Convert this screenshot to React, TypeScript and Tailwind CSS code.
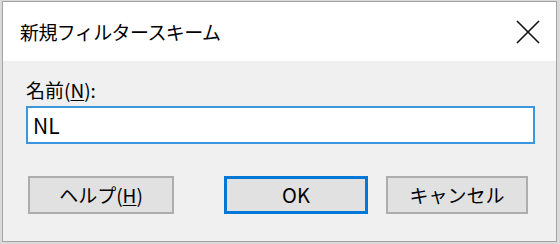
export default function App() {
  return (
    <div
      className="w-[560px] h-[244px] bg-[#dadada] pt-[1px] pl-[2px] pr-[3px] pb-[2px] text-black"
      style={{ fontFamily: "'Noto Sans CJK JP', 'Noto Sans', sans-serif" }}
    >
      <div className="flex h-full flex-col border border-[#a3a3a3]">
        {/* Title bar */}
        <div className="flex h-[59px] shrink-0 items-center justify-between bg-white pl-[17px] pr-[16px]">
          <span className="text-[19px] tracking-[-0.6px] leading-none">新規フィルタースキーム</span>
          <svg width="24" height="24" viewBox="0 0 24 24" fill="none">
            <path d="M1 1L23 23M23 1L1 23" stroke="#111" strokeWidth="1.6" />
          </svg>
        </div>

        {/* Body */}
        <div className="flex flex-1 flex-col bg-[#f0f0f0] pl-[23px] pr-[21px] pt-[18px]">
          <label className="text-[19px] leading-[22px]">
            名前(<span className="underline underline-offset-2">N</span>):
          </label>
          <div className="mt-[5px] flex h-[38px] items-center border-2 border-[#3d95e0] bg-white px-[5px]">
            <span className="text-[21px] leading-none">NL</span>
          </div>

          <div className="mt-[32px] flex items-center pl-[2px]">
            <button className="flex h-[38px] w-[146px] items-center justify-center border-2 border-[#adadad] bg-[#e1e1e1] text-[19px]">
              ヘルプ(<span className="underline underline-offset-2">H</span>)
            </button>
            <button className="ml-[50px] flex h-[38px] w-[144px] items-center justify-center border-[3px] border-[#0078d7] bg-[#e1e1e1] text-[20px]">
              OK
            </button>
            <button className="ml-[18px] flex h-[38px] w-[142px] items-center justify-center border-2 border-[#adadad] bg-[#e1e1e1] text-[19px]">
              キャンセル
            </button>
          </div>
        </div>
      </div>
    </div>
  );
}
